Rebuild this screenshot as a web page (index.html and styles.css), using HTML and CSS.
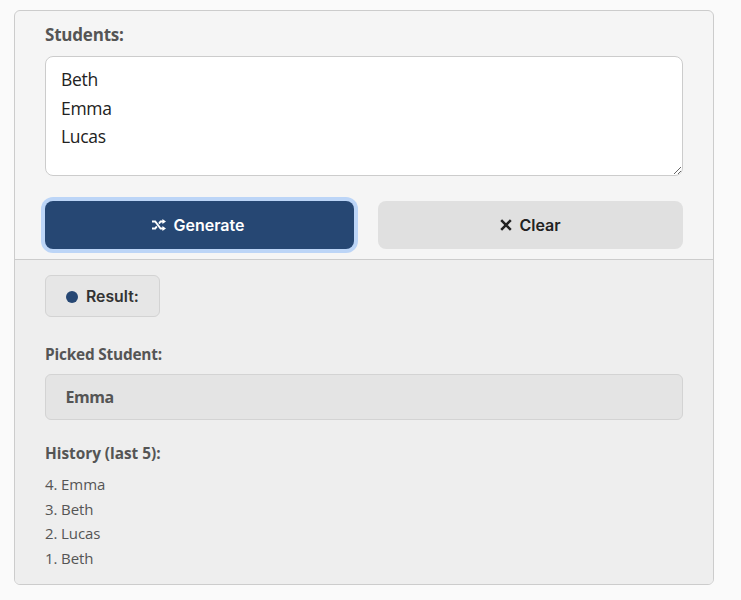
FILE: index.html
```html
<!DOCTYPE html>
<html lang="en">
<head>
<meta charset="utf-8">
<title>Student Picker</title>
<link rel="stylesheet" href="styles.css">
</head>
<body>
<main class="card">
  <section class="top">
    <label class="students-label" for="students">Students:</label>
    <textarea class="students" id="students" spellcheck="false">Beth
Emma
Lucas</textarea>
    <div class="actions">
      <button class="btn primary" type="button">
        <svg class="icon shuffle" viewBox="0 0 14 12" aria-hidden="true"><path d="M0 2.5h3.2l5.4 7H11M0 9.5h3.2l1.6-2.1M7 4.6l1.6-2.1H11" fill="none" stroke="currentColor" stroke-width="1.9"/><path d="M10.4 0l3.6 2.5-3.6 2.5zM10.4 7l3.6 2.5-3.6 2.5z" fill="currentColor"/></svg>
        Generate
      </button>
      <button class="btn secondary" type="button">
        <svg class="icon cross" viewBox="0 0 12 12" aria-hidden="true"><path d="M1.2 1.2l9.6 9.6M10.8 1.2l-9.6 9.6" fill="none" stroke="currentColor" stroke-width="2.5"/></svg>
        Clear
      </button>
    </div>
  </section>
  <section class="bottom">
    <div class="result-tag"><span class="dot"></span>Result:</div>
    <h2 class="heading picked-heading">Picked Student:</h2>
    <div class="picked">Emma</div>
    <h2 class="heading history-heading">History (last 5):</h2>
    <ul class="history">
      <li>4. Emma</li>
      <li>3. Beth</li>
      <li>2. Lucas</li>
      <li>1. Beth</li>
    </ul>
  </section>
</main>
</body>
</html>
```
FILE: styles.css
```css
* { box-sizing: border-box; }
html, body { margin: 0; }
body {
  background: #fafafa;
  padding: 10px 27px 15px 14px;
  font-family: "Open Sans", "Noto Sans", sans-serif;
  color: #555;
}
.card {
  border: 1px solid #ccc;
  border-radius: 6px;
  background: #f5f5f5;
  overflow: hidden;
}
.top {
  display: flex;
  flex-direction: column;
  padding: 13px 30px 10px;
}
.students-label {
  font-size: 17px;
  font-weight: 700;
  line-height: 22px;
  letter-spacing: -0.2px;
}
.students {
  display: block;
  width: 100%;
  height: 120px;
  margin-top: 10px;
  padding: 8px 15px;
  border: 1px solid #ccc;
  border-radius: 8px;
  background: #fff;
  color: #222;
  font: 17.5px/28.6px "Open Sans", sans-serif;
  letter-spacing: -0.3px;
  resize: vertical;
  outline: none;
}
.actions {
  display: flex;
  gap: 24px;
  margin-top: 25px;
}
.btn {
  flex: 1;
  display: flex;
  align-items: center;
  justify-content: center;
  gap: 7px;
  height: 48px;
  border: 0;
  border-radius: 8px;
  font: 600 16px/20px Inter, sans-serif;
}
.primary {
  padding: 0 9px 0 7px;
  background: #264773;
  color: #fff;
  box-shadow: 0 0 0 4px #bcd5f7;
}
.secondary {
  background: #e0e0e0;
  color: #222;
}
.icon { display: block; flex: none; }
.shuffle { width: 14px; height: 12px; }
.cross { width: 12px; height: 12px; }
.bottom {
  border-top: 1px solid #ccc;
  background: #eee;
  padding: 15px 30px 14px;
}
.result-tag {
  display: inline-flex;
  align-items: center;
  gap: 8px;
  height: 42px;
  padding: 1px 20px 0;
  border: 1px solid #d3d3d3;
  border-radius: 6px;
  background: #e6e6e6;
  color: #333;
  font: 600 15.8px/20px Inter, sans-serif;
  vertical-align: top;
}
.dot {
  width: 12px;
  height: 12px;
  border-radius: 50%;
  background: #264773;
}
.heading {
  margin: 0;
  font-size: 15.4px;
  font-weight: 700;
  line-height: 20px;
  letter-spacing: -0.2px;
}
.picked-heading { margin-top: 28px; }
.picked {
  height: 46px;
  margin-top: 9px;
  padding: 0 19.5px;
  border: 1px solid #d3d3d3;
  border-radius: 6px;
  background: #e4e4e4;
  font-size: 16px;
  font-weight: 700;
  line-height: 44px;
  letter-spacing: -0.5px;
}
.history-heading {
  margin-top: 24px;
  letter-spacing: -0.03px;
}
.history {
  list-style: none;
  margin: 8px 0 0;
  padding: 0;
  font-size: 15px;
  line-height: 24.5px;
  letter-spacing: -0.1px;
}
```
